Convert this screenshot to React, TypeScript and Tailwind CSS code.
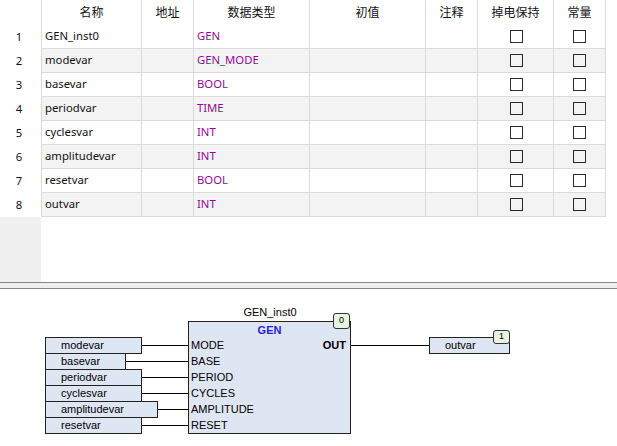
import React from "react";

const rows = [
  { n: "GEN_inst0", t: "GEN" },
  { n: "modevar", t: "GEN_MODE" },
  { n: "basevar", t: "BOOL" },
  { n: "periodvar", t: "TIME" },
  { n: "cyclesvar", t: "INT" },
  { n: "amplitudevar", t: "INT" },
  { n: "resetvar", t: "BOOL" },
  { n: "outvar", t: "INT" },
];

const inputs = [
  { v: "modevar", pin: "MODE", w: 97 },
  { v: "basevar", pin: "BASE", w: 81 },
  { v: "periodvar", pin: "PERIOD", w: 97 },
  { v: "cyclesvar", pin: "CYCLES", w: 97 },
  { v: "amplitudevar", pin: "AMPLITUDE", w: 113 },
  { v: "resetvar", pin: "RESET", w: 97 },
];

function Check() {
  return <div className="w-[13px] h-[13px] border border-[#2a2a2a] bg-transparent" />;
}

export default function App() {
  const cell = "border-l border-[#dadada] flex items-center";
  return (
    <div className="w-[617px] h-[446px] bg-white overflow-hidden text-[12px] text-[#111]" style={{ fontFamily: '"Noto Sans", "Noto Sans CJK SC", sans-serif' }}>
      {/* table area */}
      <div className="h-[282px] flex flex-col">
        <div className="grid grid-cols-[41px_100px_52px_116px_116px_52px_76px_53px] h-[25px]">
          <div />
          <div className={`${cell} justify-center`}>名称</div>
          <div className={`${cell} justify-center`}>地址</div>
          <div className={`${cell} justify-center`}>数据类型</div>
          <div className={`${cell} justify-center`}>初值</div>
          <div className={`${cell} justify-center`}>注释</div>
          <div className={`${cell} justify-center`}>掉电保持</div>
          <div className={`${cell} justify-center border-r`}>常量</div>
        </div>
        {rows.map((r, i) => (
          <div key={i} className="grid grid-cols-[41px_100px_52px_116px_116px_52px_76px_53px] h-6 text-[11.3px]">
            <div className="flex items-center justify-center bg-white pr-[3px]">{i + 1}</div>
            <div className={`${cell} border-b pl-[3px] ${i % 2 ? "bg-[#f3f3f3]" : "bg-white"}`}>{r.n}</div>
            <div className={`${cell} border-b ${i % 2 ? "bg-[#f3f3f3]" : "bg-white"}`} />
            <div className={`${cell} border-b pl-[3px] text-[#920b92] ${i % 2 ? "bg-[#f3f3f3]" : "bg-white"}`}>{r.t}</div>
            <div className={`${cell} border-b ${i % 2 ? "bg-[#f3f3f3]" : "bg-white"}`} />
            <div className={`${cell} border-b ${i % 2 ? "bg-[#f3f3f3]" : "bg-white"}`} />
            <div className={`${cell} border-b justify-center pl-[1px] ${i % 2 ? "bg-[#f3f3f3]" : "bg-white"}`}><Check /></div>
            <div className={`${cell} border-b border-r justify-center ${i % 2 ? "bg-[#f3f3f3]" : "bg-white"}`}><Check /></div>
          </div>
        ))}
        <div className="flex-1 flex">
          <div className="w-[41px] bg-[#f0f0f0]" />
        </div>
      </div>
      {/* splitter */}
      <div className="h-[7px] bg-[#efefef] border-y border-[#80868c]" />
      {/* diagram */}
      <div className="relative h-[157px] text-[11px] text-black" style={{ fontFamily: '"Liberation Sans", Arial, sans-serif' }}>
        <div className="absolute left-[188px] top-[16px] w-[164px] text-center leading-[14px]">GEN_inst0</div>
        {/* block */}
        <div className="absolute left-[188px] top-[32px] w-[163px] h-[113px] border border-[#222] bg-[#dfe6f3]">
          <div className="text-center font-bold text-[#1f1fd6] leading-[14px] mt-[1px]">GEN</div>
          <div className="flex justify-between">
            <div className="flex flex-col pl-[2px]">
              {inputs.map((p) => (
                <div key={p.pin} className="h-4 leading-4">{p.pin}</div>
              ))}
            </div>
            <div className="pr-[4px] h-4 leading-4 font-bold">OUT</div>
          </div>
        </div>
        <div className="absolute left-[333px] top-[24px] w-[17px] h-[16px] rounded-[3px] border border-[#333] bg-[#e6f4e1] text-[9px] flex items-center justify-center">0</div>
        {/* inputs */}
        {inputs.map((p, i) => (
          <React.Fragment key={p.v}>
            <div
              className="absolute left-[45px] h-[17px] border border-[#222] bg-[#dfe6f3] pl-[15px] leading-[14px]"
              style={{ top: 48 + i * 16, width: p.w }}
            >
              {p.v}
            </div>
            <div
              className="absolute h-px bg-black"
              style={{ top: 56 + i * 16, left: 45 + p.w, width: 189 - 45 - p.w }}
            />
          </React.Fragment>
        ))}
        {/* output */}
        <div className="absolute left-[351px] top-[56px] w-[78px] h-px bg-black" />
        <div className="absolute left-[429px] top-[48px] w-[81px] h-[17px] border border-[#222] bg-[#dfe6f3] pl-[15px] leading-[14px]">outvar</div>
        <div className="absolute left-[493px] top-[41px] w-[17px] h-[14px] rounded-[3px] border border-[#333] bg-[#e6f4e1] text-[9px] flex items-center justify-center">1</div>
      </div>
    </div>
  );
}
